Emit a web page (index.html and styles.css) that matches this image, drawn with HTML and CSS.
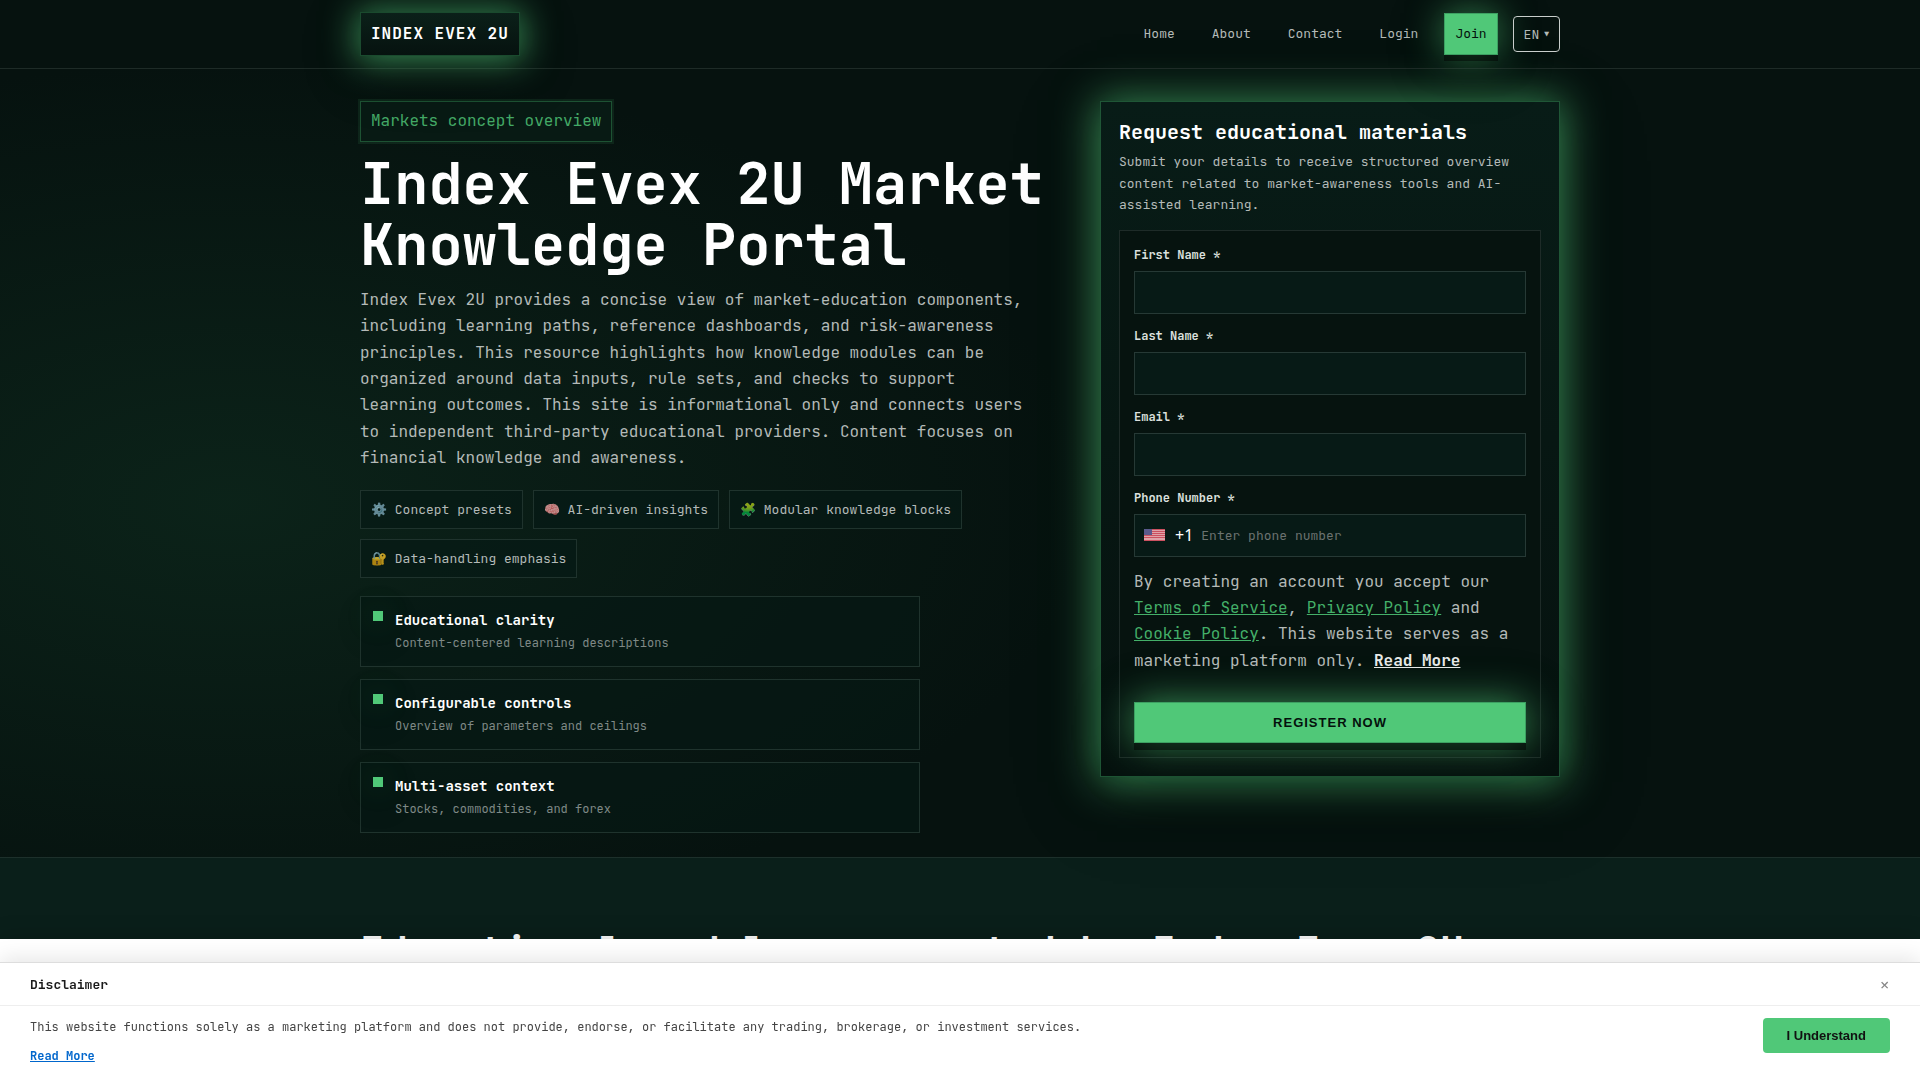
FILE: index.html
```html
<!DOCTYPE html>
<html lang="en">
<head>
    <meta charset="UTF-8">
    <meta name="viewport" content="width=device-width, initial-scale=1.0">
    <title>Index Evex 2U</title>
    <link rel="stylesheet" href="styles.css">
</head>
<body>
    <header class="header">
        <div class="container header-row">
            <a class="logo" href="#">INDEX EVEX 2U</a>
            <nav class="nav">
                <a class="nav-link" href="#">Home</a>
                <a class="nav-link" href="#">About</a>
                <a class="nav-link" href="#">Contact</a>
                <a class="nav-link" href="#">Login</a>
                <a class="nav-link nav-join" href="#">Join</a>
                <button class="lang-btn" type="button">EN <span class="lang-arrow">▼</span></button>
            </nav>
        </div>
    </header>

    <main>
        <section class="hero">
            <div class="container hero-grid">
                <div class="hero-text">
                    <span class="badge">Markets concept overview</span>
                    <h1>Index Evex 2U Market Knowledge Portal</h1>
                    <p class="lead">Index Evex 2U provides a concise view of market-education components, including learning paths, reference dashboards, and risk-awareness principles. This resource highlights how knowledge modules can be organized around data inputs, rule sets, and checks to support learning outcomes. This site is informational only and connects users to independent third-party educational providers. Content focuses on financial knowledge and awareness.</p>
                    <ul class="chips">
                        <li class="chip"><span class="emoji">⚙️</span> Concept presets</li>
                        <li class="chip"><span class="emoji">🧠</span> AI-driven insights</li>
                        <li class="chip"><span class="emoji">🧩</span> Modular knowledge blocks</li>
                        <li class="chip"><span class="emoji">🔐</span> Data-handling emphasis</li>
                    </ul>
                    <ul class="features">
                        <li class="feature">
                            <span class="dot"></span>
                            <div>
                                <strong class="feature-title">Educational clarity</strong>
                                <span class="feature-text">Content-centered learning descriptions</span>
                            </div>
                        </li>
                        <li class="feature">
                            <span class="dot"></span>
                            <div>
                                <strong class="feature-title">Configurable controls</strong>
                                <span class="feature-text">Overview of parameters and ceilings</span>
                            </div>
                        </li>
                        <li class="feature">
                            <span class="dot"></span>
                            <div>
                                <strong class="feature-title">Multi-asset context</strong>
                                <span class="feature-text">Stocks, commodities, and forex</span>
                            </div>
                        </li>
                    </ul>
                </div>

                <aside class="card">
                    <h2 class="card-title">Request educational materials</h2>
                    <p class="card-text">Submit your details to receive structured overview content related to market-awareness tools and AI-assisted learning.</p>
                    <form class="form">
                        <div class="field">
                            <label for="first-name">First Name *</label>
                            <input type="text" id="first-name">
                        </div>
                        <div class="field">
                            <label for="last-name">Last Name *</label>
                            <input type="text" id="last-name">
                        </div>
                        <div class="field">
                            <label for="email">Email *</label>
                            <input type="email" id="email">
                        </div>
                        <div class="field">
                            <label for="phone">Phone Number *</label>
                            <div class="phone">
                                <svg class="flag" viewBox="0 0 21 12" aria-hidden="true">
                                    <rect width="21" height="12" fill="#dfa3a8"/>
                                    <path d="M0 .5h21M0 2.5h21M0 4.5h21M0 6.5h21M0 8.5h21M0 11.5h21" stroke="#cb5160" stroke-width="1"/>
                                    <rect width="8" height="6" fill="#5a5a8c"/>
                                </svg>
                                <span class="phone-code">+1</span>
                                <input type="tel" id="phone" placeholder="Enter phone number">
                            </div>
                        </div>
                        <p class="terms">By creating an account you accept our <a href="#">Terms of Service</a>, <a href="#">Privacy Policy</a> and <a href="#">Cookie Policy</a>. This website serves as a marketing platform only. <a class="more" href="#">Read More</a></p>
                        <button class="register-btn" type="submit">REGISTER NOW</button>
                    </form>
                </aside>
            </div>
        </section>

        <section class="about">
            <div class="container">
                <h2>Educational modules presented by Index Evex 2U</h2>
            </div>
        </section>
    </main>

    <div class="notice">
        <div class="disclaimer">
            <div class="disclaimer-head">
                <strong>Disclaimer</strong>
                <button class="close-btn" type="button" aria-label="Close">×</button>
            </div>
            <div class="disclaimer-body">
                <div>
                    <p>This website functions solely as a marketing platform and does not provide, endorse, or facilitate any trading, brokerage, or investment services.</p>
                    <a href="#">Read More</a>
                </div>
                <button class="accept-btn" type="button">I Understand</button>
            </div>
        </div>
    </div>
</body>
</html>
```
FILE: styles.css
```css
* {
    box-sizing: border-box;
}
body {
    margin: 0;
    font-family: "JetBrains Mono", "DejaVu Sans Mono", monospace;
    font-size: 16px;
    line-height: 1.65;
    color: #b4bab8;
    background-color: #06120f;
    overflow: hidden;
}
h1, h2, p, ul {
    margin: 0;
    padding: 0;
}
ul {
    list-style: none;
}
.container {
    width: 100%;
    max-width: 1200px;
    margin: 0 auto;
}

/* Header */
.header {
    position: relative;
    padding: 12px 0;
    border-bottom: 1px solid #1e2b27;
}
.header-row {
    display: flex;
    align-items: center;
    justify-content: space-between;
}
.logo {
    padding: 8px 10px;
    border: 1px solid #1a4a2e;
    background: linear-gradient(#0b2019, #06120f);
    color: #fff;
    font-weight: bold;
    letter-spacing: 1px;
    text-decoration: none;
    box-shadow: 0 2px 34px 3px rgba(80, 200, 120, 0.65), 0 14px 60px rgba(0, 0, 0, 0.3);
}
.nav {
    display: flex;
    align-items: center;
    gap: 15px;
    font-size: 13px;
}
.nav-link {
    padding: 9px 10px;
    border: 1px solid transparent;
    color: #b4bab8;
    text-decoration: none;
}
.nav-join {
    border-color: #3da062;
    background: #50c878;
    color: #04110c;
    box-shadow: 0 6px 0 rgba(0, 0, 0, 0.45), 0 0 36px rgba(80, 200, 120, 0.6), 0 10px 60px rgba(0, 0, 0, 0.3);
}
.lang-btn {
    display: flex;
    align-items: center;
    gap: 5px;
    height: 36px;
    padding: 0 10px;
    border: 1px solid #c9cecc;
    border-radius: 4px;
    background: transparent;
    color: #b4bab8;
    font-family: inherit;
    font-size: 13px;
}
.lang-arrow {
    font-size: 8px;
}

/* Hero */
.hero {
    padding: 32px 0 24px;
    background: radial-gradient(ellipse 860px 440px at 12% 55%, rgba(15, 46, 32, 0.6), rgba(6, 18, 15, 0));
}
.hero-grid {
    display: grid;
    grid-template-columns: minmax(0, 1fr) 460px;
    gap: 40px;
    align-items: start;
}
.hero-text {
    display: flex;
    flex-direction: column;
    align-items: flex-start;
}
.badge {
    padding: 6px 10px;
    border: 1px solid #1d5233;
    background: #081a14;
    color: #44aa67;
    box-shadow: 0 0 0 2px rgba(80, 200, 120, 0.1);
}
h1 {
    margin: 11px 0 12px;
    font-size: 57px;
    line-height: 61px;
    color: #fff;
}
.lead {
    max-width: 680px;
}
.chips {
    display: flex;
    flex-wrap: wrap;
    gap: 10px;
    margin: 18px 0;
}
.chip {
    padding: 8px 10px;
    border: 1px solid #1f332d;
    background: rgba(6, 26, 22, 0.7);
    font-size: 13px;
}
.emoji {
    opacity: 0.75;
}
.features {
    display: grid;
    gap: 12px;
    width: 100%;
    max-width: 560px;
}
.feature {
    display: flex;
    gap: 12px;
    padding: 12px;
    border: 1px solid #1f332d;
    background: rgba(5, 24, 20, 0.7);
}
.dot {
    width: 10px;
    height: 10px;
    margin-top: 2px;
    background: #50c878;
    box-shadow: 0 0 30px rgba(80, 200, 120, 0.3), 0 8px 40px rgba(0, 0, 0, 0.4);
}
.feature-title {
    display: block;
    margin-bottom: 2px;
    font-size: 14px;
    color: #fff;
}
.feature-text {
    display: block;
    font-size: 12px;
    color: #7f8986;
}

/* Form card */
.card {
    padding: 18px;
    border: 1px solid #1f5636;
    background: linear-gradient(#081c17, #06120f);
    box-shadow: 0 2px 40px 3px rgba(80, 200, 120, 0.65), 0 20px 80px rgba(0, 0, 0, 0.3);
}
.card-title {
    margin-bottom: 7px;
    font-size: 20px;
    line-height: 24px;
    color: #fff;
}
.card-text {
    margin-bottom: 14px;
    font-size: 13px;
}
.form {
    padding: 14px;
    border: 1px solid #1e2b28;
    background: #06130f;
}
.field {
    margin-bottom: 12px;
}
.field label {
    display: block;
    margin-bottom: 6px;
    font-size: 12px;
    line-height: 20px;
    font-weight: bold;
    color: #dce0de;
}
.field input {
    display: block;
    width: 100%;
    height: 43px;
    padding: 0 10px;
    border: 1px solid #263935;
    background: #071a16;
    color: #fff;
    font-family: inherit;
    font-size: 13px;
}
.phone {
    display: flex;
    align-items: center;
    height: 43px;
    padding: 0 9px;
    border: 1px solid #263935;
    background: #071a16;
}
.flag {
    width: 21px;
    height: 12px;
}
.phone-code {
    margin: 0 8px 0 10px;
    font-family: "Noto Sans", sans-serif;
    color: #fff;
}
.phone input {
    flex: 1;
    height: 30px;
    padding: 0;
    border: 0;
    background: transparent;
}
.phone input::placeholder {
    color: #6b7270;
}
.terms {
    margin-bottom: 28px;
}
.terms a {
    color: #44b069;
}
.terms .more {
    color: #e6e9e8;
    font-weight: bold;
}
.register-btn {
    display: block;
    width: 100%;
    height: 41px;
    border: 1px solid #3da062;
    background: #50c878;
    color: #04110c;
    font-family: "Liberation Sans", Arial, sans-serif;
    font-size: 13px;
    font-weight: bold;
    letter-spacing: 1px;
    box-shadow: 0 7px 0 rgba(0, 0, 0, 0.45), 0 0 38px rgba(80, 200, 120, 0.7), 0 10px 60px rgba(0, 0, 0, 0.4);
}

/* Next section */
.about {
    padding: 72px 0;
    border-top: 1px solid #1d302b;
    background: #0a1f1a;
}
.about h2 {
    font-size: 40px;
    line-height: 44px;
    color: #fff;
}

/* Disclaimer */
.notice {
    position: fixed;
    left: 0;
    right: 0;
    bottom: 0;
    padding-top: 23px;
    background: #fff;
    box-shadow: 0 -4px 20px rgba(0, 0, 0, 0.15);
}
.disclaimer {
    border-top: 1px solid #ddd;
    background: #fff;
    color: #444;
    font-size: 12px;
    box-shadow: 0 -4px 20px rgba(0, 0, 0, 0.1);
}
.disclaimer-head {
    display: flex;
    align-items: center;
    justify-content: space-between;
    height: 43px;
    padding: 0 30px;
    border-bottom: 1px solid #eee;
    font-size: 13px;
    color: #1a1a1a;
}
.close-btn {
    padding: 0;
    border: 0;
    background: none;
    color: #888;
    font-family: inherit;
    font-size: 18px;
}
.disclaimer-body {
    display: flex;
    align-items: flex-start;
    justify-content: space-between;
    gap: 24px;
    padding: 12px 30px 13px;
}
.disclaimer-body p {
    margin-bottom: 9px;
}
.disclaimer-body a {
    color: #0066cc;
    font-weight: bold;
}
.accept-btn {
    height: 35px;
    padding: 0 24px;
    border: 0;
    border-radius: 4px;
    background: #50c878;
    color: #111;
    font-family: "Liberation Sans", Arial, sans-serif;
    font-size: 13px;
    font-weight: bold;
}
```
